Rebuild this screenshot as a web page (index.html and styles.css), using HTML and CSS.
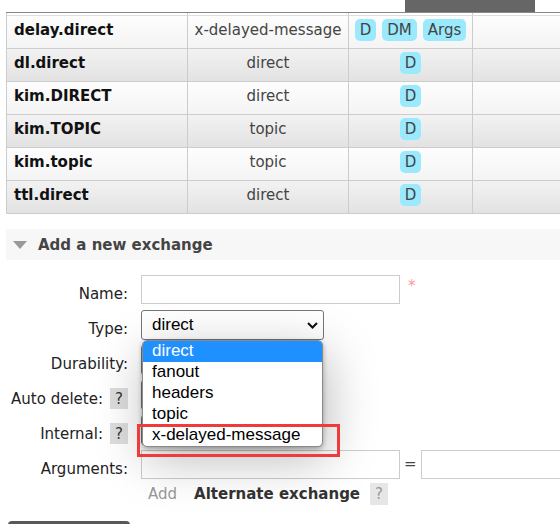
FILE: index.html
```html
<!DOCTYPE html>
<html>
<head>
<meta charset="utf-8">
<link rel="stylesheet" href="styles.css">
</head>
<body>
<div class="page">
  <div class="topbar"><div class="tab"></div></div>
  <div class="list">
    <div class="row head"><div class="c"></div><div class="c"></div><div class="c"></div><div class="c"></div></div>
    <div class="row light"><div class="c name">delay.direct</div><div class="c type">x-delayed-message</div><div class="c feat"><span class="badge">D</span><span class="badge">DM</span><span class="badge">Args</span></div><div class="c"></div></div>
    <div class="row alt"><div class="c name">dl.direct</div><div class="c type">direct</div><div class="c feat"><span class="badge">D</span></div><div class="c"></div></div>
    <div class="row light"><div class="c name">kim.DIRECT</div><div class="c type">direct</div><div class="c feat"><span class="badge">D</span></div><div class="c"></div></div>
    <div class="row alt"><div class="c name">kim.TOPIC</div><div class="c type">topic</div><div class="c feat"><span class="badge">D</span></div><div class="c"></div></div>
    <div class="row light"><div class="c name">kim.topic</div><div class="c type">topic</div><div class="c feat"><span class="badge">D</span></div><div class="c"></div></div>
    <div class="row alt"><div class="c name">ttl.direct</div><div class="c type">direct</div><div class="c feat"><span class="badge">D</span></div><div class="c"></div></div>
  </div>

  <div class="section-h"><span class="tri"></span><span>Add a new exchange</span></div>

  <div class="form">
    <div class="frow">
      <div class="lbl">Name:</div>
      <div class="fld"><input class="txt" type="text"><span class="req">*</span></div>
    </div>
    <div class="frow">
      <div class="lbl">Type:</div>
      <div class="fld">
        <div class="sel main">
          <span>direct</span>
          <svg class="chev" width="11" height="7" viewBox="0 0 11 7"><path d="M1 1 L5.5 5.5 L10 1" fill="none" stroke="#111" stroke-width="2"/></svg>
          <div class="dropdown">
            <div class="opt on">direct</div>
            <div class="opt">fanout</div>
            <div class="opt">headers</div>
            <div class="opt">topic</div>
            <div class="opt">x-delayed-message</div>
          </div>
          <div class="mark"></div>
        </div>
      </div>
    </div>
    <div class="frow">
      <div class="lbl">Durability:</div>
      <div class="fld"><div class="sel"></div></div>
    </div>
    <div class="frow">
      <div class="lbl"><span>Auto delete:</span><span class="help">?</span></div>
      <div class="fld"><div class="sel"></div></div>
    </div>
    <div class="frow">
      <div class="lbl"><span>Internal:</span><span class="help">?</span></div>
      <div class="fld"><div class="sel"></div></div>
    </div>
    <div class="frow args">
      <div class="lbl">Arguments:</div>
      <div class="fld"><input class="txt" type="text"><span class="eq">=</span><input class="txt wide" type="text"></div>
    </div>
    <div class="addrow">
      <span class="add">Add</span>
      <span class="alt-ex">Alternate exchange</span>
      <span class="help light">?</span>
    </div>
    <div class="btn"></div>
  </div>
</div>
</body>
</html>
```

FILE: styles.css
```css
html, body {
  margin: 0;
  padding: 0;
  overflow: hidden;
  background: #fff;
}
body {
  font-family: "DejaVu Sans", Verdana, sans-serif;
  font-size: 15px;
  color: #222;
}
.page {
  width: 620px;
  padding-left: 6px;
}
.topbar {
  height: 12px;
  display: flex;
}
.tab {
  margin-left: 399px;
  width: 130px;
  height: 12px;
  background: #666;
}
.list {
  border-top: 1px solid #888;
}
.row {
  display: grid;
  grid-template-columns: 181px 161px 124px 160px;
  height: 33px;
  box-sizing: border-box;
  border-left: 1px solid #ccc;
  border-bottom: 1px solid #ccc;
}
.row.head {
  height: 3px;
  border-bottom-color: #ddd;
  background: #fff;
}
.row.light {
  background: linear-gradient(#fdfdfd, #f4f4f4);
}
.row.alt {
  background: linear-gradient(#f2f2f2, #e2e2e2);
}
.c {
  border-right: 1px solid #ccc;
  padding-top: 3px;
  line-height: 22px;
  box-sizing: border-box;
}
.row.head .c { padding: 0; }
.name {
  font-weight: bold;
  color: #111;
  padding-left: 7px;
}
.type {
  text-align: center;
  color: #444;
}
.feat {
  display: flex;
  justify-content: center;
  gap: 6px;
}
.badge {
  display: inline-block;
  height: 22px;
  line-height: 22px;
  padding: 0 5px;
  background: #9be9fd;
  border-radius: 5px;
  color: #444;
}
.section-h {
  margin-top: 15px;
  height: 31px;
  background: #f7f7f7;
  display: flex;
  align-items: center;
  padding-left: 7px;
  font-weight: bold;
  color: #444;
}
.tri {
  width: 0;
  height: 0;
  border-left: 7px solid transparent;
  border-right: 7px solid transparent;
  border-top: 8px solid #999;
  margin-right: 11px;
}
.form {
  margin-top: 15px;
}
.frow {
  display: flex;
  height: 35px;
}
.frow.args { height: 33px; }
.lbl {
  width: 122px;
  flex: none;
  height: 21px;
  margin-top: 8px;
  display: flex;
  justify-content: flex-end;
  align-items: center;
  gap: 7px;
  white-space: nowrap;
  color: #222;
}
.help {
  display: inline-flex;
  align-items: center;
  justify-content: center;
  width: 18px;
  height: 21px;
  background: #ddd;
  color: #333;
}
.help.light {
  height: 22px;
  background: #e6e6e6;
  color: #999;
}
.fld {
  margin-left: 13px;
  display: flex;
  align-items: flex-start;
}
.txt {
  width: 259px;
  height: 29px;
  box-sizing: border-box;
  border: 1px solid #ccc;
  margin: 0;
  padding: 0 4px;
  background: #fff;
}
.txt.wide { width: 200px; }
.req {
  color: #f99;
  margin-left: 8px;
  line-height: 22px;
}
.eq {
  margin: 0 4px;
  line-height: 29px;
  color: #444;
}
.sel {
  position: relative;
  width: 110px;
  height: 30px;
  box-sizing: border-box;
  border: 1px solid #767676;
  border-radius: 3px;
  background: #fff;
}
.sel.main {
  width: 183px;
  display: flex;
  align-items: center;
  justify-content: space-between;
  padding: 0 5px 0 10px;
  font-family: "Liberation Sans", Arial, sans-serif;
  font-size: 17px;
  color: #000;
  z-index: 5;
}
.chev { display: block; }
.dropdown {
  position: absolute;
  top: 29px;
  left: 0;
  width: 181px;
  box-sizing: border-box;
  border: 1px solid #8a8a8a;
  border-radius: 5px;
  overflow: hidden;
  background: #fff;
  box-shadow: 4px 12px 50px rgba(0,0,0,0.28), 0 2px 5px rgba(0,0,0,0.3);
}
.opt {
  height: 21px;
  line-height: 19px;
  padding-left: 9px;
  color: #000;
}
.opt.on {
  background: #1e90ff;
  color: #fff;
}
.mark {
  position: absolute;
  left: -5px;
  top: 113px;
  width: 203px;
  height: 33px;
  box-sizing: border-box;
  border: 3px solid #ee3b3b;
}
.addrow {
  display: flex;
  align-items: center;
  height: 22px;
  margin-left: 142px;
}
.add {
  color: #999;
}
.alt-ex {
  font-weight: bold;
  color: #333;
  margin-left: 17px;
  margin-right: 10px;
}
.btn {
  margin-top: 16px;
  margin-left: 2px;
  width: 122px;
  height: 30px;
  background: #585858;
  border-radius: 4px;
}
```
